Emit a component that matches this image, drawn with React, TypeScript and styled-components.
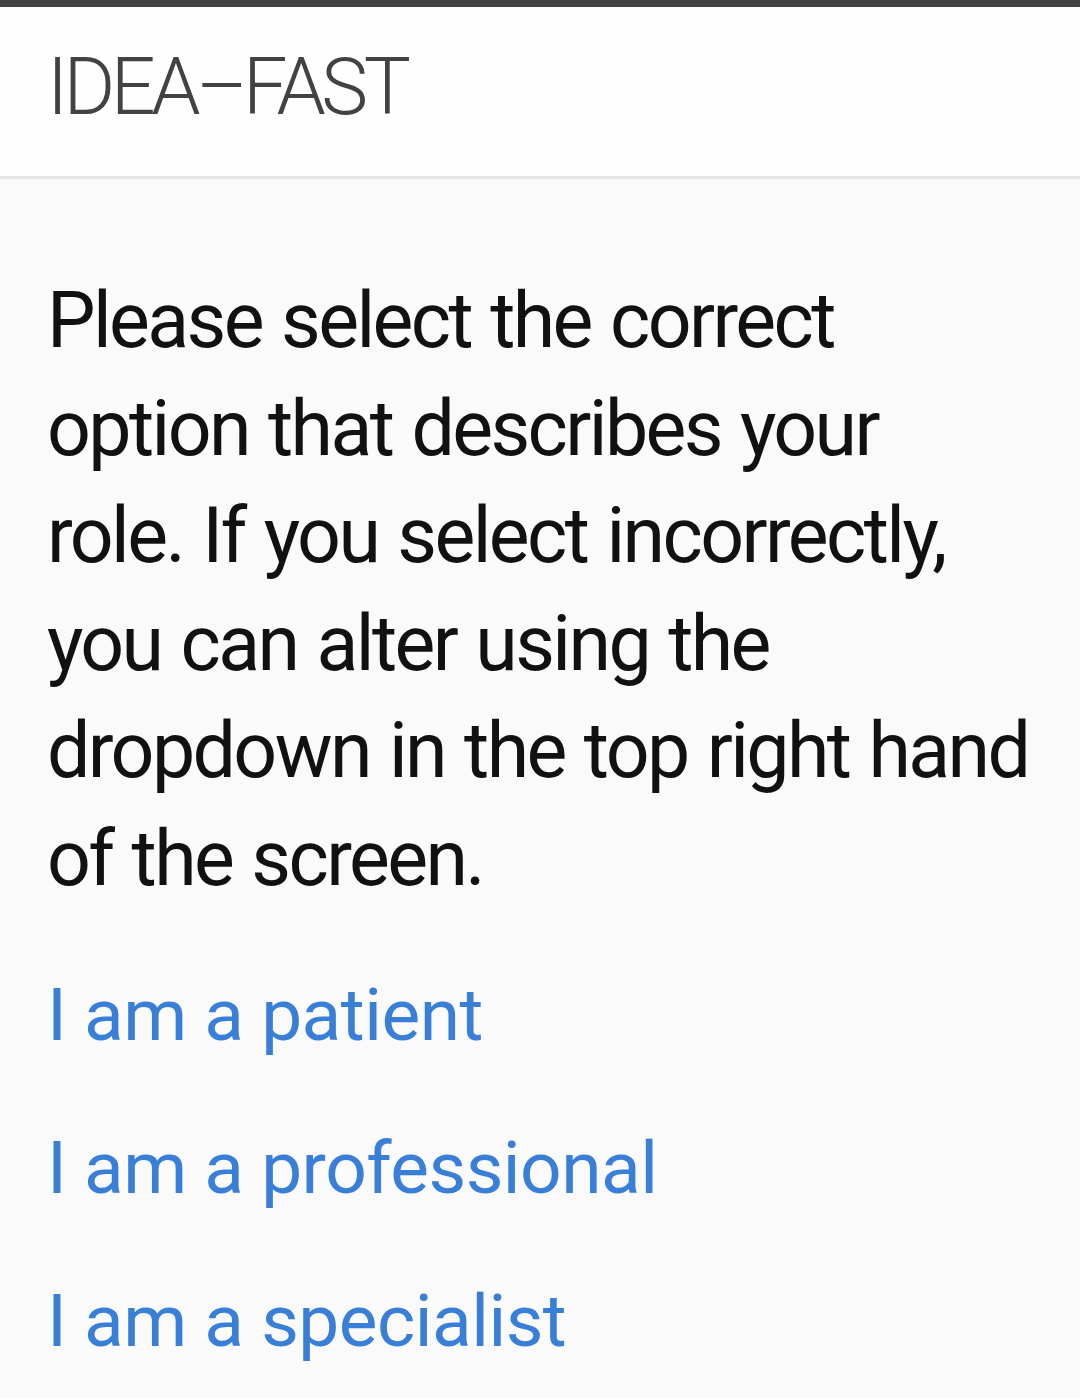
import styled, { createGlobalStyle } from "styled-components";

const GlobalStyle = createGlobalStyle`
  html, body {
    margin: 0;
    padding: 0;
    background: #fafafa;
  }
  body {
    font-family: Roboto, "Noto Sans", Arial, sans-serif;
  }
`;

const Page = styled.div`
  min-height: 1398px;
  background: #fafafa;
  border-top: 7px solid #424242;
`;

const Header = styled.header`
  height: 169px;
  background: #fefefe;
  border-bottom: 3px solid #e5e5e5;
  display: flex;
  align-items: flex-start;
  padding: 0 47px;
`;

const Brand = styled.h1`
  margin: 41px 0 0;
  font-size: 79px;
  font-weight: 300;
  line-height: 1;
  color: #424242;
  letter-spacing: -4.5px;
`;

const Content = styled.main`
  padding: 89px 47px 0;
`;

const Intro = styled.p`
  margin: 0;
  max-width: 982px;
  font-size: 77px;
  line-height: 107.6px;
  letter-spacing: -2.6px;
  word-spacing: 2.6px;
  color: #111111;
`;

const Options = styled.ul`
  list-style: none;
  margin: 25px 0 0;
  padding: 0;
`;

const Option = styled.li`
  font-size: 73px;
  line-height: 153px;
  letter-spacing: -0.5px;
`;

const RoleLink = styled.a`
  color: #3a7fd7;
  text-decoration: none;
  cursor: pointer;
`;

const roles = ["patient", "professional", "specialist"];

export default function App() {
  return (
    <>
      <GlobalStyle />
      <Page>
        <Header>
          <Brand>IDEA–FAST</Brand>
        </Header>
        <Content>
          <Intro>
            Please select the correct option that describes your role. If you
            select incorrectly, you can alter using the dropdown in the top
            right hand of the screen.
          </Intro>
          <Options>
            {roles.map((role) => (
              <Option key={role}>
                <RoleLink>I am a {role}</RoleLink>
              </Option>
            ))}
          </Options>
        </Content>
      </Page>
    </>
  );
}
